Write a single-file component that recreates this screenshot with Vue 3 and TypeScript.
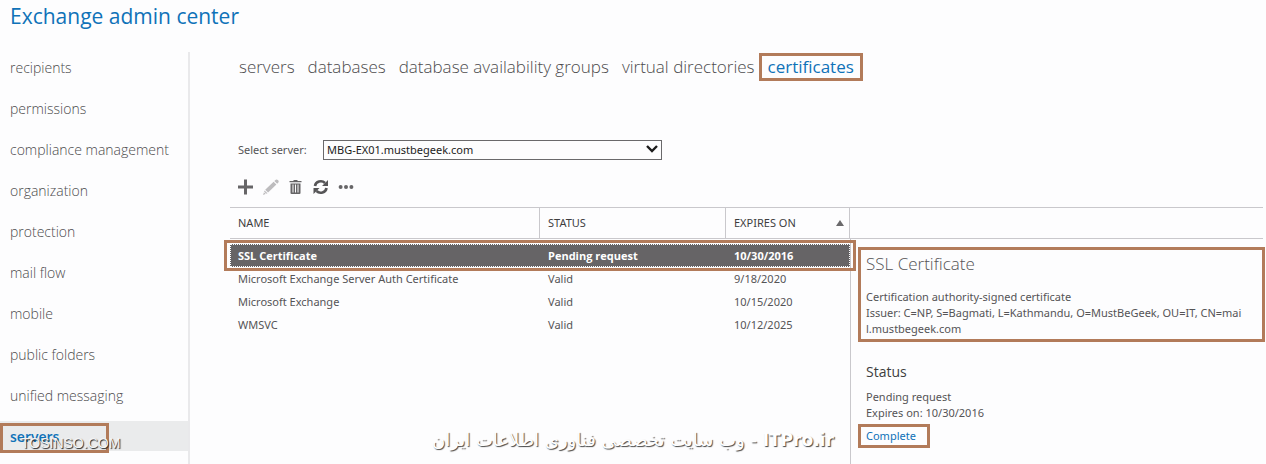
<script setup lang="ts">
import { ref } from 'vue'

interface Certificate {
  name: string
  status: string
  expires: string
}

const features: string[] = [
  'recipients',
  'permissions',
  'compliance management',
  'organization',
  'protection',
  'mail flow',
  'mobile',
  'public folders',
  'unified messaging',
  'servers',
]
const tabs: string[] = [
  'servers',
  'databases',
  'database availability groups',
  'virtual directories',
  'certificates',
]
const certificates: Certificate[] = [
  { name: 'SSL Certificate', status: 'Pending request', expires: '10/30/2016' },
  { name: 'Microsoft Exchange Server Auth Certificate', status: 'Valid', expires: '9/18/2020' },
  { name: 'Microsoft Exchange', status: 'Valid', expires: '10/15/2020' },
  { name: 'WMSVC', status: 'Valid', expires: '10/12/2025' },
]

const activeFeature = ref('servers')
const activeTab = ref('certificates')
const selected = ref(0)
const server = ref('MBG-EX01.mustbegeek.com')
</script>

<template>
  <div class="page">
    <header class="header"><h1>Exchange admin center</h1></header>
    <div class="body">
      <nav class="sidebar" aria-label="Features">
        <a
          v-for="item in features"
          :key="item"
          href="#"
          class="feature"
          :class="{ active: item === activeFeature }"
          @click.prevent="activeFeature = item"
        >{{ item }}<span v-if="item === activeFeature" class="mark"></span></a>
      </nav>

      <main class="main">
        <nav class="tabs" aria-label="Sections">
          <a
            v-for="tab in tabs"
            :key="tab"
            href="#"
            class="tab"
            :class="{ active: tab === activeTab }"
            @click.prevent="activeTab = tab"
          >{{ tab }}<span v-if="tab === activeTab" class="mark"></span></a>
        </nav>

        <div class="picker">
          <label for="server">Select server:</label>
          <div class="select-wrap">
            <select id="server" v-model="server">
              <option>MBG-EX01.mustbegeek.com</option>
            </select>
            <svg class="chevron" viewBox="0 0 12 8" width="12" height="8" aria-hidden="true">
              <path d="M1 1l5 5 5-5" fill="none" stroke="#1c1c1c" stroke-width="2.4" />
            </svg>
          </div>
        </div>

        <div class="toolbar">
          <button type="button" aria-label="New">
            <svg viewBox="0 0 16 16" width="16" height="16">
              <path d="M6 0.5h3v6h6v3h-6v6h-3v-6h-6v-3h6z" fill="#666567" />
            </svg>
          </button>
          <button type="button" aria-label="Edit">
            <svg viewBox="0 0 16 16" width="16" height="16" fill="#bdbcbe">
              <path d="M12.2 1.2q1.2-1.5 2.7-.2 1.5 1.5.2 2.8l-.9.9-2.9-2.6z" />
              <path d="M10.6 2.8l2.8 2.7-8.3 8.1-2.9-2.8z" />
              <path d="M1.6 11.5l2.9 2.8L0 16z" />
              <path d="M1 12.9l2 2" stroke="#fdfdfe" stroke-width=".8" />
            </svg>
          </button>
          <button type="button" aria-label="Delete">
            <svg viewBox="0 0 16 16" width="16" height="16">
              <path d="M5.5 1h4v1h4v1.2h-12V2h4z" fill="#666567" />
              <path d="M2.5 4.5h10V14q0 1-1 1h-8q-1 0-1-1z" fill="#666567" />
              <path d="M5 5.5v8M7.5 5.5v8M10 5.5v8" stroke="#fdfdfe" stroke-width="1" />
            </svg>
          </button>
          <button type="button" aria-label="Refresh">
            <svg viewBox="0 0 16 16" width="16" height="16">
              <path
                d="M2 7a5.8 5.4 0 0 1 10-3M13.5 9a5.8 5.4 0 0 1-10 3"
                fill="none"
                stroke="#565557"
                stroke-width="2.6"
              />
              <path d="M15 1v6H9z M.5 15V9h6z" fill="#565557" />
            </svg>
          </button>
          <button type="button" aria-label="More">
            <svg viewBox="0 0 16 16" width="16" height="16" fill="#666567">
              <circle cx="2.6" cy="8" r="2" />
              <circle cx="8" cy="8" r="2" />
              <circle cx="13.4" cy="8" r="2" />
            </svg>
          </button>
        </div>

        <div class="content">
          <table class="list">
            <colgroup>
              <col class="col-name" />
              <col class="col-status" />
              <col class="col-expires" />
            </colgroup>
            <thead>
              <tr>
                <th scope="col">NAME</th>
                <th scope="col">STATUS</th>
                <th scope="col">
                  <span class="sorted">EXPIRES ON
                    <svg viewBox="0 0 8 6" width="8" height="6" aria-hidden="true">
                      <path d="M4 0l4 6H0z" fill="#6a696b" />
                    </svg>
                  </span>
                </th>
              </tr>
            </thead>
            <tbody>
              <tr
                v-for="(cert, i) in certificates"
                :key="cert.name"
                :class="{ selected: i === selected }"
                @click="selected = i"
              >
                <td>{{ cert.name }}<span v-if="i === selected" class="mark"></span></td>
                <td>{{ cert.status }}</td>
                <td>{{ cert.expires }}</td>
              </tr>
            </tbody>
          </table>

          <section class="details">
            <div class="summary">
              <h2>SSL Certificate</h2>
              <p>Certification authority-signed certificate</p>
              <p class="issuer">Issuer: C=NP, S=Bagmati, L=Kathmandu, O=MustBeGeek, OU=IT, CN=mai<br />l.mustbegeek.com</p>
              <span class="mark"></span>
            </div>
            <h3>Status</h3>
            <p>Pending request</p>
            <p>Expires on: 10/30/2016</p>
            <a href="#" class="complete">Complete<span class="mark"></span></a>
          </section>
        </div>
      </main>
    </div>
    <div class="stamp stamp-left">TOSINSO.COM</div>
    <div class="stamp stamp-center" dir="rtl" lang="fa"><bdi class="site">ITPro.ir</bdi> - وب سایت تخصصی فناوری اطلاعات ایران</div>
  </div>
</template>

<style>
body {
  background: #fdfdfe;
}
</style>

<style scoped>
.page {
  position: relative;
  display: flex;
  flex-direction: column;
  min-height: 100vh;
  overflow: hidden;
  background: #fdfdfe;
  color: #555456;
  font: 11px/16px "Noto Sans", "Open Sans", sans-serif;
}
.page * {
  box-sizing: border-box;
}
h1,
h2,
h3,
p {
  margin: 0;
  font-weight: 400;
}
a {
  color: inherit;
  text-decoration: none;
}
.mark {
  position: absolute;
  border: 3px solid #b27b5a;
  pointer-events: none;
}
.header,
.sidebar,
.tabs,
h2,
h3 {
  font-family: "Open Sans", sans-serif;
}
.header {
  height: 52px;
  padding: 2px 10px;
}
h1 {
  color: #0f72b8;
  font-size: 21px;
  line-height: 28px;
}
.body {
  display: flex;
  flex: 1;
}
.sidebar {
  display: flex;
  flex: none;
  flex-direction: column;
  gap: 11px;
  width: 190px;
  border-right: 2px solid #e9e9eb;
}
.feature {
  position: relative;
  height: 30px;
  padding-left: 10px;
  color: #4c4b4d;
  font-size: 14px;
  font-weight: 300;
  line-height: 31px;
}
.feature.active {
  background: #eaebec;
  color: #0f72b8;
  font-weight: 600;
}
.feature .mark {
  inset: 2px 79px -2px 0;
}
.main {
  display: flex;
  flex: 1;
  flex-direction: column;
  min-width: 0;
  padding: 0 3px 0 40px;
}
.tabs {
  display: flex;
  gap: 13px;
  padding-left: 9px;
  color: #4c4b4d;
  font-size: 17px;
  font-weight: 300;
  line-height: 30px;
  white-space: nowrap;
}
.tab {
  position: relative;
}
.tab.active {
  color: #0f72b8;
  font-weight: 400;
}
.tab .mark {
  inset: 1px -9px 1px -9px;
}
.picker {
  display: flex;
  align-items: center;
  margin-top: 58px;
  padding-left: 8px;
}
.picker label {
  width: 85px;
}
.select-wrap {
  position: relative;
  width: 339px;
}
select {
  display: block;
  width: 100%;
  height: 20px;
  padding: 0 3px;
  border: 1px solid #6a696b;
  border-radius: 0;
  appearance: none;
  background: #fdfdfe;
  color: #1c1c1c;
  font: inherit;
}
.chevron {
  position: absolute;
  top: 5px;
  right: 4px;
  pointer-events: none;
}
.toolbar {
  display: flex;
  gap: 9px;
  margin-top: 19px;
  padding-left: 8px;
}
.toolbar button {
  width: 16px;
  height: 16px;
  padding: 0;
  border: 0;
  background: none;
}
.toolbar svg {
  display: block;
}
.content {
  display: grid;
  flex: 1;
  grid-template-columns: minmax(0, 620fr) minmax(0, 413fr);
  margin-top: 12px;
  border-top: 1px solid #c9c8cc;
}
.list {
  align-self: start;
  width: 100%;
  border-spacing: 0;
  table-layout: fixed;
}
.col-name {
  width: 50%;
}
.col-status {
  width: 30%;
}
.col-expires {
  width: 20%;
}
th,
td {
  padding: 0 0 0 8px;
  text-align: left;
  white-space: nowrap;
}
th {
  height: 31px;
  border-right: 1px solid #c9c8cc;
  border-bottom: 1px solid #c9c8cc;
  color: #3e3d3f;
  font-weight: 400;
}
.sorted {
  display: flex;
  align-items: center;
  justify-content: space-between;
  padding-right: 5px;
}
tbody::before {
  display: block;
  height: 5px;
  content: "";
}
td {
  height: 23px;
}
.selected {
  position: relative;
  outline: 1px dotted #fdfdfe;
  outline-offset: -1px;
  background: #666466;
  color: #fff;
}
.selected td {
  font-family: "Open Sans", sans-serif;
  font-weight: 700;
}
.selected .mark {
  inset: -4px -6px;
}
.details {
  margin-top: 30px;
  padding: 8px 0 0 15px;
  border-top: 1px solid #c9c8cc;
  border-left: 1px solid #c9c8cc;
}
.summary {
  position: relative;
  height: 95px;
  margin-bottom: 20px;
}
.summary .mark {
  inset: 0 -2px 0 -8px;
}
h2 {
  padding: 4px 0 13px;
  font-size: 17px;
  font-weight: 300;
  line-height: 25px;
}
.issuer {
  white-space: nowrap;
}
h3 {
  margin-bottom: 7px;
  color: #3e3d3f;
  font-size: 14px;
  line-height: 20px;
}
.complete {
  position: relative;
  display: inline-block;
  margin-top: 7px;
  color: #0f72b8;
}
.complete .mark {
  inset: -4px -14px -4px -8px;
}
.stamp {
  position: absolute;
  color: #fff;
  white-space: nowrap;
  pointer-events: none;
}
.stamp-left {
  bottom: 12px;
  left: 21px;
  color: #f4f4f4;
  font: 14px/18px "Liberation Sans", Arial, sans-serif;
  text-shadow: 1px 1px 1px #222;
}
.stamp-center {
  bottom: 12px;
  left: 50%;
  margin-left: -201px;
  font: 18px/24px "DejaVu Sans", sans-serif;
  text-shadow: 1px 1px 1px #444;
}
.site {
  font-size: 17px;
  font-weight: 700;
}
</style>
